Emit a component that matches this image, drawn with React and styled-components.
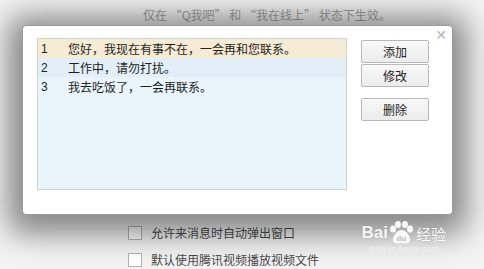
import React from 'react'
import styled, { createGlobalStyle } from 'styled-components'

const GlobalStyle = createGlobalStyle`
  html, body {
    margin: 0;
    padding: 0;
    background: #f3f3f3;
  }
  body {
    font-family: "Noto Sans CJK SC", "Liberation Sans", sans-serif;
    font-size: 12px;
    overflow: hidden;
  }
`

const Page = styled.div`
  position: relative;
  width: 484px;
  height: 269px;
  overflow: hidden;
  background: #f3f3f3;
`

const Hint = styled.div`
  height: 25px;
  padding-left: 143px;
  line-height: 29px;
  color: #a2a2a2;
  white-space: nowrap;
`

const Dialog = styled.div`
  position: relative;
  z-index: 2;
  width: 431px;
  height: 190px;
  margin-left: 22px;
  box-sizing: border-box;
  background: #fff;
  border: 1px solid #9a9a9a;
  border-radius: 4px;
  box-shadow: 0 5px 30px 14px rgba(0, 0, 0, 0.45);
  display: flex;
  padding: 12px 0 0 14px;
  gap: 14px;
`

const Close = styled.div`
  position: absolute;
  top: 2px;
  right: 5px;
  color: #b5b5b5;
  font-family: "DejaVu Sans", sans-serif;
  font-size: 14px;
  line-height: 14px;
`

const List = styled.div`
  width: 310px;
  height: 152px;
  box-sizing: border-box;
  background: #eaf5fb;
  border: 1px solid #c9d5dc;
  display: flex;
  flex-direction: column;
`

const Row = styled.div`
  display: flex;
  align-items: center;
  height: 19px;
  color: #1e1e1e;
  background: ${p => p.$bg || 'transparent'};
  white-space: nowrap;
`

const Num = styled.span`
  width: 30px;
  padding-left: 3px;
  box-sizing: border-box;
  font-family: "Liberation Sans", sans-serif;
  font-size: 12px;
`

const Buttons = styled.div`
  display: flex;
  flex-direction: column;
  gap: 1px;
  padding-top: 2px;
`

const Button = styled.button`
  width: 68px;
  height: 23px;
  margin-top: ${p => (p.$gap ? '10px' : '0')};
  box-sizing: border-box;
  border: 1px solid #b9b9b9;
  border-radius: 2px;
  background: linear-gradient(#f8f8f8, #ececec);
  color: #222;
  font-family: inherit;
  font-size: 12px;
  padding: 0;
`

const Options = styled.div`
  position: relative;
  z-index: 1;
  margin-top: -19px;
  padding-left: 128px;
  display: flex;
  flex-direction: column;
  gap: 8px;
`

const Option = styled.label`
  display: flex;
  align-items: center;
  gap: 9px;
  height: 19px;
  color: #4a4a4a;
  white-space: nowrap;
`

const Box = styled.span`
  width: 12px;
  height: 12px;
  border: 1px solid #b4b4b4;
  background: #fff;
`

const Watermark = styled.div`
  position: absolute;
  right: 38px;
  bottom: 16px;
  z-index: 3;
  display: flex;
  flex-direction: column;
  align-items: center;
`

const WmLogo = styled.div`
  display: flex;
  align-items: center;
  color: rgba(255, 255, 255, 0.92);
  font-family: "Liberation Sans", sans-serif;
  font-weight: bold;
  font-size: 17px;
  text-shadow: 0 0 2px rgba(0, 0, 0, 0.15);
`

const WmCn = styled.span`
  font-family: "Noto Sans CJK SC", sans-serif;
  font-size: 15px;
  font-weight: normal;
  margin-left: 2px;
`

const WmUrl = styled.div`
  font-family: "Liberation Sans", sans-serif;
  font-size: 8px;
  line-height: 8px;
  color: rgba(255, 255, 255, 0.6);
  letter-spacing: 0.3px;
`

function Paw() {
  return (
    <svg width="26" height="24" viewBox="0 0 26 24">
      <g fill="rgba(255,255,255,0.92)">
        <ellipse cx="5" cy="8" rx="3" ry="3.5" />
        <ellipse cx="10" cy="3.5" rx="3" ry="3.5" />
        <ellipse cx="17" cy="3.5" rx="3" ry="3.5" />
        <ellipse cx="22" cy="8" rx="3" ry="3.5" />
        <path d="M13.5 9 C9 9 5 15 5 19 C5 22 8 23 13.5 22 C19 23 22 22 22 19 C22 15 18 9 13.5 9Z" />
      </g>
      <text x="13.5" y="20" textAnchor="middle" fontSize="8" fontFamily="Liberation Sans" fontWeight="bold" fill="#c9c9c9">du</text>
    </svg>
  )
}

const messages = [
  { id: 1, text: '您好，我现在有事不在，一会再和您联系。', bg: '#f5ecd3' },
  { id: 2, text: '工作中，请勿打扰。', bg: '#e2eff8' },
  { id: 3, text: '我去吃饭了，一会再联系。' },
]

export default function App() {
  return (
    <Page>
      <GlobalStyle />
      <Hint>仅在 “Q我吧” 和 “我在线上” 状态下生效。</Hint>
      <Dialog>
        <Close>✕</Close>
        <List>
          {messages.map(m => (
            <Row key={m.id} $bg={m.bg}>
              <Num>{m.id}</Num>
              {m.text}
            </Row>
          ))}
        </List>
        <Buttons>
          <Button>添加</Button>
          <Button>修改</Button>
          <Button $gap>删除</Button>
        </Buttons>
      </Dialog>
      <Options>
        <Option><Box />显示对方输入状态（仅在线上）</Option>
        <Option><Box />允许来消息时自动弹出窗口</Option>
        <Option><Box />默认使用腾讯视频播放视频文件</Option>
      </Options>
      <Watermark>
        <WmLogo>
          Bai<Paw /><WmCn>经验</WmCn>
        </WmLogo>
        <WmUrl>jingyan.baidu.com</WmUrl>
      </Watermark>
    </Page>
  )
}
